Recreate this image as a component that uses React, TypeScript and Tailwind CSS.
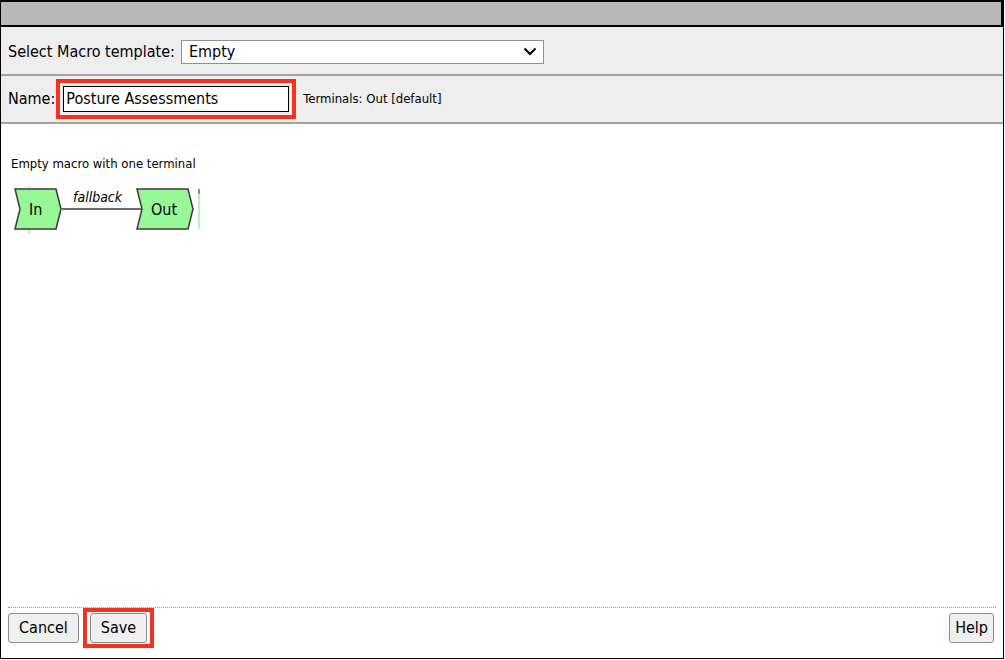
import React from "react";

const font = { fontFamily: "Tahoma, 'DejaVu Sans Condensed', 'DejaVu Sans', sans-serif" };

const Node = ({ label, x, w }: { label: string; x: number; w: number }) => (
  <g transform={`translate(${x},0)`}>
    <polygon
      points={`1,3 ${w - 5},3 ${w},23 ${w - 5},43 1,43 6,23`}
      fill="#98f898"
      stroke="#3a3a3a"
      strokeWidth="1.5"
    />
    <text x="15" y="29" fontSize="16" fill="#000" fontFamily="Tahoma, 'DejaVu Sans Condensed', 'DejaVu Sans', sans-serif">
      {label}
    </text>
  </g>
);

const Diagram = () => (
  <svg width="200" height="50" viewBox="0 0 200 50" className="block">
    <line x1="28" y1="0" x2="28" y2="48" stroke="#7de07d" strokeWidth="1" />
    <line x1="61" y1="23" x2="140" y2="23" stroke="#3a3a3a" strokeWidth="1.5" />
    <Node label="In" x={13} w={47} />
    <Node label="Out" x={135} w={57} />
    <text x="72" y="16" fontSize="14" fontStyle="italic" fill="#000" fontFamily="Tahoma, 'DejaVu Sans Condensed', 'DejaVu Sans', sans-serif">
      fallback
    </text>
    <line x1="198" y1="3" x2="198" y2="43" stroke="#7de07d" strokeWidth="1" />
    <line x1="198" y1="3" x2="198" y2="8" stroke="#3a3a3a" strokeWidth="1" />
  </svg>
);

export default function App() {
  return (
    <div className="w-[1005px] h-[660px] bg-white" style={font}>
      <div className="flex flex-col w-[1004px] h-[659px] border-l border-r border-b border-black">
        <div className="h-[27px] bg-[#b8b8b8] border-t-2 border-b-2 border-r-2 border-black shrink-0" />

        <div className="h-[49px] shrink-0 flex items-center bg-[#eeeeee] border-b-2 border-[#a3a3a3] pl-[7px] pt-[2px]">
          <span className="text-[16px] text-black mr-[6px]">Select Macro template:</span>
          <div className="w-[363px] h-[24px] flex items-center justify-between bg-white border border-[#8f8f8f] pl-[7px] pr-[6px]">
            <span className="text-[16px] text-black">Empty</span>
            <svg width="14" height="9" viewBox="0 0 14 9">
              <path d="M1.5 1.5 L7 7 L12.5 1.5" fill="none" stroke="#000" strokeWidth="2" />
            </svg>
          </div>
        </div>

        <div className="h-[48px] shrink-0 flex items-center bg-[#eeeeee] border-b-2 border-[#a3a3a3] pl-[7px]">
          <span className="text-[16px] text-black">Name:</span>
          <div className="ml-[1px] border-[4px] border-[#f5311f] p-[3px]">
            <div className="w-[226px] h-[26px] flex items-center bg-white border border-black pl-[2px]">
              <span className="text-[16px] text-black">Posture Assessments</span>
            </div>
          </div>
          <span className="ml-[7px] text-[13px] text-black">Terminals: Out [default]</span>
        </div>

        <div className="flex-1 flex flex-col bg-white">
          <div className="pl-[10px] pt-[32px] text-[13px] text-black leading-[16px]">Empty macro with one terminal</div>
          <div className="mt-[14px]">
            <Diagram />
          </div>
        </div>

        <div className="shrink-0 mx-[7px] border-t border-dotted border-[#9a9a9a]" />
        <div className="h-[50px] shrink-0 flex items-start justify-between pl-[7px] pr-[9px]">
          <div className="flex items-start">
            <button className="mt-[5px] h-[30px] px-[10px] text-[16px] text-black bg-[#efefef] border border-[#8a8a8a] rounded-[3px]">Cancel</button>
            <div className="ml-[4px] border-[4px] border-[#f5311f] px-[3px] py-[1px]">
              <button className="h-[30px] px-[10px] text-[16px] text-black bg-[#efefef] border border-[#8a8a8a] rounded-[3px]">Save</button>
            </div>
          </div>
          <button className="mt-[5px] h-[30px] px-[5px] text-[16px] text-black bg-[#efefef] border border-[#8a8a8a] rounded-[3px]">Help</button>
        </div>
      </div>
    </div>
  );
}
